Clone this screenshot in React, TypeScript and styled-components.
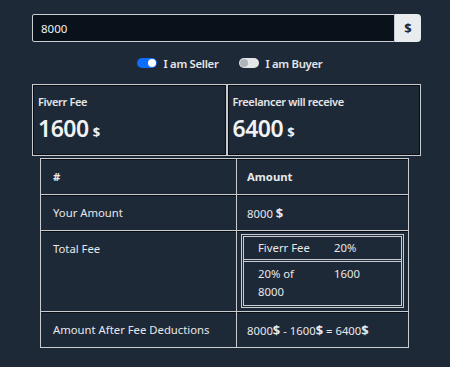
import styled, { createGlobalStyle } from "styled-components";

const GlobalStyle = createGlobalStyle`
  html, body {
    margin: 0;
    padding: 0;
    background: #1e2937;
  }
  body {
    font-family: "Noto Sans", "Open Sans", sans-serif;
    color: #e6e8eb;
    font-size: 11.3px;
  }
`;

const Page = styled.div`
  width: 389px;
  margin-left: 32px;
  padding-top: 14px;
  padding-bottom: 19px;
`;

const InputGroup = styled.div`
  display: flex;
  height: 28px;
`;

const AmountInput = styled.div`
  flex: 1;
  display: flex;
  align-items: center;
  padding-left: 8px;
  background: #09111a;
  border: 1px solid #c9ced4;
  border-radius: 2px 0 0 2px;
  color: #eef0f2;
  font-size: 11.5px;
`;

const Addon = styled.div`
  width: 26px;
  display: flex;
  align-items: center;
  justify-content: center;
  background: #e9ecef;
  border-radius: 0 4px 4px 0;
  color: #212529;
  font-weight: 700;
  font-size: 13px;
`;

const ToggleRow = styled.div`
  display: flex;
  justify-content: center;
  gap: 20px;
  margin-top: 9px;
  height: 24px;
  align-items: center;
  padding-left: 6px;
`;

const ToggleItem = styled.label`
  display: flex;
  align-items: center;
  gap: 7px;
  font-weight: 600;
  color: #e4e6e9;
  letter-spacing: -0.3px;
`;

const Switch = styled.span<{ on: boolean }>`
  position: relative;
  width: 20px;
  height: 10px;
  border-radius: 6px;
  background: ${(p) => (p.on ? "#0d6efd" : "#e4e6e8")};
  &::after {
    content: "";
    position: absolute;
    top: 1px;
    left: ${(p) => (p.on ? "11px" : "1px")};
    width: 8px;
    height: 8px;
    border-radius: 50%;
    background: ${(p) => (p.on ? "#ffffff" : "#aeb4ba")};
  }
`;

const Stats = styled.div`
  display: flex;
  gap: 2px;
  padding: 1px;
  margin-top: 9px;
  background: #c8ccd0;
`;

const StatCard = styled.div`
  flex: 1;
  height: 70px;
  box-sizing: border-box;
  border: 1px solid #0b0f14;
  background: #1e2937;
  padding: 8px 4px 0;
`;

const StatLabel = styled.div`
  font-weight: 600;
  font-size: 11px;
  letter-spacing: -0.35px;
  color: #e4e6e9;
`;

const StatValue = styled.div`
  margin-top: 3px;
  font-size: 23px;
  font-weight: 600;
  letter-spacing: -0.5px;
  color: #f0f2f4;
  span {
    font-size: 13px;
    margin-left: 4px;
    font-weight: 700;
    letter-spacing: 0;
  }
`;

const Table = styled.table`
  width: 369px;
  margin: 2px 0 0 8px;
  border-collapse: collapse;
  table-layout: fixed;
`;

const Cell = styled.td<{ head?: boolean; top?: boolean }>`
  border: 1px solid #c9cdd2;
  box-shadow: inset 0 1px 0 #0b0f14;
  padding: ${(p) => (p.top ? "10px 10px" : "0 10px")};
  height: 35px;
  vertical-align: ${(p) => (p.top ? "top" : "middle")};
  font-weight: ${(p) => (p.head ? 700 : 400)};
  color: #e6e8eb;
  &:first-child {
    padding-left: 12px;
  }
`;

const FeeBox = styled.div`
  border: 3px double #c9cdd2;
  margin: 0 -6px 0 -6px;
`;

const FeeRow = styled.div<{ first?: boolean }>`
  display: grid;
  grid-template-columns: 76px 1fr;
  padding: ${(p) => (p.first ? "2px 0 2px 14px" : "3px 0 4px 14px")};
  line-height: 18px;
  border-bottom: ${(p) => (p.first ? "3px double #c9cdd2" : "none")};
`;

const FeeName = styled.div`
  width: 56px;
`;

const Dollar = styled.b`
  font-size: 13px;
`;

export default function App() {
  return (
    <>
      <GlobalStyle />
      <Page>
        <InputGroup>
          <AmountInput>8000</AmountInput>
          <Addon>$</Addon>
        </InputGroup>
        <ToggleRow>
          <ToggleItem>
            <Switch on={true} />I am Seller
          </ToggleItem>
          <ToggleItem>
            <Switch on={false} />I am Buyer
          </ToggleItem>
        </ToggleRow>
        <Stats>
          <StatCard>
            <StatLabel>Fiverr Fee</StatLabel>
            <StatValue>
              1600<span>$</span>
            </StatValue>
          </StatCard>
          <StatCard>
            <StatLabel>Freelancer will receive</StatLabel>
            <StatValue>
              6400<span>$</span>
            </StatValue>
          </StatCard>
        </Stats>
        <Table>
          <colgroup>
            <col style={{ width: 196 }} />
            <col />
          </colgroup>
          <tbody>
            <tr>
              <Cell head>#</Cell>
              <Cell head>Amount</Cell>
            </tr>
            <tr>
              <Cell>Your Amount</Cell>
              <Cell>
                8000 <Dollar>$</Dollar>
              </Cell>
            </tr>
            <tr>
              <Cell top>Total Fee</Cell>
              <Cell top style={{ paddingTop: 3, paddingBottom: 3 }}>
                <FeeBox>
                  <FeeRow first>
                    <FeeName>Fiverr Fee</FeeName>
                    <div>20%</div>
                  </FeeRow>
                  <FeeRow>
                    <FeeName>20% of 8000</FeeName>
                    <div>1600</div>
                  </FeeRow>
                </FeeBox>
              </Cell>
            </tr>
            <tr>
              <Cell>Amount After Fee Deductions</Cell>
              <Cell>
                8000<Dollar>$</Dollar> - 1600<Dollar>$</Dollar> = 6400<Dollar>$</Dollar>
              </Cell>
            </tr>
          </tbody>
        </Table>
      </Page>
    </>
  );
}
